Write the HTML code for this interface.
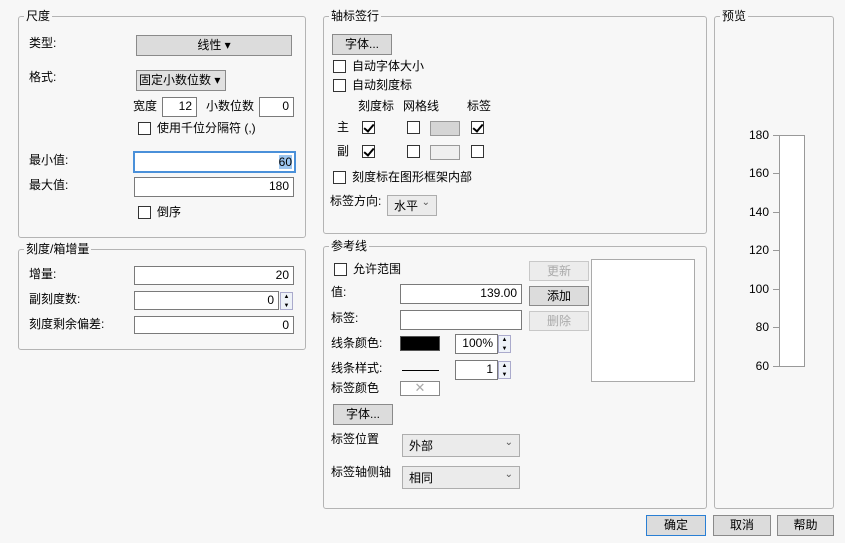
<!DOCTYPE html>
<html><head><meta charset="utf-8"><style>
*{box-sizing:border-box;margin:0;padding:0}
body{width:845px;height:543px;background:#f7f7f7;font-family:"Liberation Sans","Noto Sans CJK SC",sans-serif;font-size:12px;color:#000;position:relative;overflow:hidden}
.a{position:absolute;white-space:nowrap;line-height:14px}
.g{position:absolute;border:1px solid #b4b4b4;border-radius:3px}
.gt{position:absolute;background:#f7f7f7;padding:0 2px;line-height:14px}
.in{position:absolute;background:#fff;border:1px solid #7a7a7a;text-align:right;padding-right:4px;line-height:16px}
.btn{position:absolute;background:#dcdcdc;border:1px solid #8a8a8a;text-align:center;line-height:18px}
.cb{position:absolute;width:13px;height:13px;border:1px solid #333;background:#fff}
.ck::after{content:"";position:absolute;left:3px;top:0px;width:4px;height:8px;border-right:2px solid #000;border-bottom:2px solid #000;transform:rotate(40deg)}
.dd{position:absolute;background:#ebebeb;border:1px solid #adadad;padding-left:6px;line-height:20px}
.dd::after{content:"⌄";position:absolute;right:6px;top:-3px;font-size:10px;color:#555}
.sp{position:absolute;width:13px;border:1px solid #aac;background:#eef2f8;font-size:6px;text-align:center;line-height:9px}
.tk{position:absolute;left:773px;width:6px;height:1px;background:#999}
.tl{position:absolute;right:76px;width:40px;text-align:right;line-height:14px}
</style></head><body>
<!-- 尺度 -->
<div class="g" style="left:18px;top:16px;width:288px;height:222px"></div>
<div class="gt" style="left:24px;top:9px">尺度</div>
<div class="a" style="left:29px;top:36px">类型:</div>
<div class="btn" style="left:136px;top:35px;width:156px;height:21px">线性 ▾</div>
<div class="a" style="left:29px;top:70px">格式:</div>
<div class="btn" style="left:136px;top:70px;width:90px;height:21px;text-align:left;padding-left:2px;background:#e1e1e1">固定小数位数 ▾</div>
<div class="a" style="left:133px;top:99px">宽度</div>
<div class="in" style="left:162px;top:97px;width:35px;height:20px">12</div>
<div class="a" style="left:206px;top:99px">小数位数</div>
<div class="in" style="left:259px;top:97px;width:35px;height:20px">0</div>
<div class="cb" style="left:138px;top:122px"></div>
<div class="a" style="left:157px;top:121px">使用千位分隔符 (,)</div>
<div class="a" style="left:29px;top:153px">最小值:</div>
<div class="in" style="left:133px;top:151px;width:163px;height:22px;border:2px solid #4a90d9;line-height:18px;padding-right:2px"><span style="background:#9cc5ef">60</span></div>
<div class="a" style="left:29px;top:178px">最大值:</div>
<div class="in" style="left:134px;top:177px;width:160px;height:20px">180</div>
<div class="cb" style="left:138px;top:206px"></div>
<div class="a" style="left:157px;top:205px">倒序</div>
<!-- 刻度 -->
<div class="g" style="left:18px;top:249px;width:288px;height:101px"></div>
<div class="gt" style="left:24px;top:242px">刻度/箱增量</div>
<div class="a" style="left:29px;top:267px">增量:</div>
<div class="in" style="left:134px;top:266px;width:160px;height:19px">20</div>
<div class="a" style="left:29px;top:292px">副刻度数:</div>
<div class="in" style="left:134px;top:291px;width:145px;height:19px">0</div>
<div class="sp" style="left:280px;top:292px;height:18px">▲<br>▼</div>
<div class="a" style="left:29px;top:317px">刻度剩余偏差:</div>
<div class="in" style="left:134px;top:316px;width:160px;height:18px">0</div>
<!-- 轴标签行 -->
<div class="g" style="left:323px;top:16px;width:384px;height:218px"></div>
<div class="gt" style="left:329px;top:9px">轴标签行</div>
<div class="btn" style="left:332px;top:34px;width:60px;height:21px">字体...</div>
<div class="cb" style="left:333px;top:60px"></div>
<div class="a" style="left:352px;top:59px">自动字体大小</div>
<div class="cb" style="left:333px;top:79px"></div>
<div class="a" style="left:352px;top:78px">自动刻度标</div>
<div class="a" style="left:358px;top:99px">刻度标</div>
<div class="a" style="left:403px;top:99px">网格线</div>
<div class="a" style="left:467px;top:99px">标签</div>
<div class="a" style="left:337px;top:120px">主</div>
<div class="cb ck" style="left:362px;top:121px"></div>
<div class="cb" style="left:407px;top:121px"></div>
<div style="position:absolute;left:430px;top:121px;width:30px;height:15px;background:#d5d5d5;border:1px solid #999"></div>
<div class="cb ck" style="left:471px;top:121px"></div>
<div class="a" style="left:337px;top:144px">副</div>
<div class="cb ck" style="left:362px;top:145px"></div>
<div class="cb" style="left:407px;top:145px"></div>
<div style="position:absolute;left:430px;top:145px;width:30px;height:15px;background:#efefef;border:1px solid #999"></div>
<div class="cb" style="left:471px;top:145px"></div>
<div class="cb" style="left:333px;top:171px"></div>
<div class="a" style="left:352px;top:170px">刻度标在图形框架内部</div>
<div class="a" style="left:330px;top:194px">标签方向:</div>
<div class="dd" style="left:387px;top:195px;width:50px;height:21px">水平</div>
<!-- 参考线 -->
<div class="g" style="left:323px;top:246px;width:384px;height:263px"></div>
<div class="gt" style="left:329px;top:239px">参考线</div>
<div class="cb" style="left:334px;top:263px"></div>
<div class="a" style="left:353px;top:262px">允许范围</div>
<div class="btn" style="left:529px;top:261px;width:60px;height:20px;color:#aaa;border-color:#c8c8c8;background:#ececec">更新</div>
<div class="btn" style="left:529px;top:286px;width:60px;height:20px">添加</div>
<div class="btn" style="left:529px;top:311px;width:60px;height:20px;color:#aaa;border-color:#c8c8c8;background:#ececec">删除</div>
<div style="position:absolute;left:591px;top:259px;width:104px;height:123px;background:#fff;border:1px solid #aaa"></div>
<div class="a" style="left:331px;top:285px">值:</div>
<div class="in" style="left:400px;top:284px;width:122px;height:20px">139.00</div>
<div class="a" style="left:331px;top:311px">标签:</div>
<div class="in" style="left:400px;top:310px;width:122px;height:20px"></div>
<div class="a" style="left:331px;top:336px">线条颜色:</div>
<div style="position:absolute;left:400px;top:336px;width:40px;height:15px;background:#000;border:1px solid #555"></div>
<div class="in" style="left:455px;top:334px;width:43px;height:20px">100%</div>
<div class="sp" style="left:498px;top:335px;height:18px">▲<br>▼</div>
<div class="a" style="left:331px;top:361px">线条样式:</div>
<div style="position:absolute;left:402px;top:370px;width:37px;height:1px;background:#000"></div>
<div class="in" style="left:455px;top:360px;width:43px;height:20px">1</div>
<div class="sp" style="left:498px;top:361px;height:18px">▲<br>▼</div>
<div class="a" style="left:331px;top:381px">标签颜色</div>
<div style="position:absolute;left:400px;top:381px;width:40px;height:15px;background:#fff;border:1px solid #888;text-align:center;line-height:12px;color:#aaa;font-size:13px">✕</div>
<div class="btn" style="left:333px;top:404px;width:60px;height:21px">字体...</div>
<div class="a" style="left:331px;top:432px">标签位置</div>
<div class="dd" style="left:402px;top:434px;width:118px;height:23px;line-height:22px">外部</div>
<div class="a" style="left:331px;top:465px">标签轴侧轴</div>
<div class="dd" style="left:402px;top:466px;width:118px;height:23px;line-height:22px">相同</div>
<!-- 预览 -->
<div class="g" style="left:714px;top:16px;width:120px;height:493px"></div>
<div class="gt" style="left:720px;top:9px">预览</div>
<div style="position:absolute;left:779px;top:135px;width:26px;height:232px;background:#fff;border:1px solid #999"></div>
<div class="tk" style="top:135px"></div><div class="tl" style="top:128px">180</div>
<div class="tk" style="top:173px"></div><div class="tl" style="top:166px">160</div>
<div class="tk" style="top:212px"></div><div class="tl" style="top:205px">140</div>
<div class="tk" style="top:250px"></div><div class="tl" style="top:243px">120</div>
<div class="tk" style="top:289px"></div><div class="tl" style="top:282px">100</div>
<div class="tk" style="top:327px"></div><div class="tl" style="top:320px">80</div>
<div class="tk" style="top:366px"></div><div class="tl" style="top:359px">60</div>
<!-- bottom -->
<div class="btn" style="left:646px;top:515px;width:60px;height:21px;border-color:#2a7fd4">确定</div>
<div class="btn" style="left:713px;top:515px;width:58px;height:21px">取消</div>
<div class="btn" style="left:777px;top:515px;width:57px;height:21px">帮助</div>
</body></html>
